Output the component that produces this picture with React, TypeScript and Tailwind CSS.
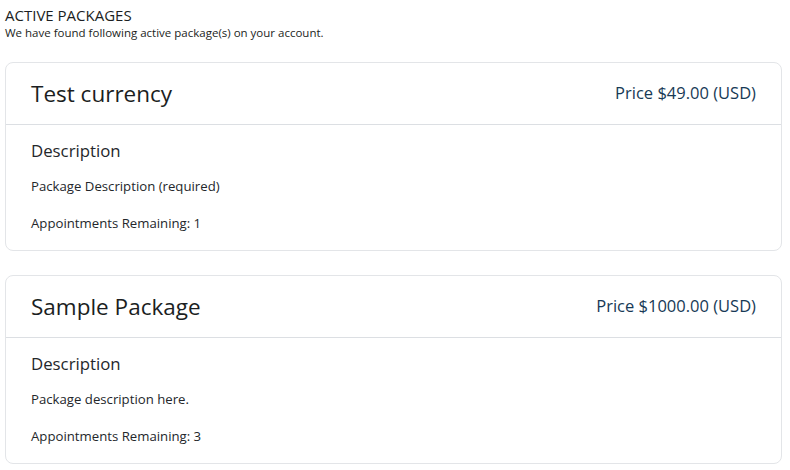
import React from 'react';

type Pkg = {
  name: string;
  price: string;
  description: string;
  remaining: number;
};

const packages: Pkg[] = [
  { name: 'Test currency', price: '$49.00', description: 'Package Description (required)', remaining: 1 },
  { name: 'Sample Package', price: '$1000.00', description: 'Package description here.', remaining: 3 },
];

const PackageCard = ({ pkg }: { pkg: Pkg }) => (
  <div className="rounded-lg border border-[#e3e5e8] bg-white">
    <div className="flex items-center justify-between h-[62px] px-[25px] border-b border-[#dcdfe3]">
      <h3 className="text-[22.5px] text-[#1b1e22] leading-none mt-[2px]">{pkg.name}</h3>
      <span className="text-[16.5px] text-[#173a56]">Price {pkg.price} (USD)</span>
    </div>
    <div className="px-[25px] pt-[14px] pb-[18px] text-[#24272b]">
      <h4 className="text-[16.8px] leading-[24px]">Description</h4>
      <p className="text-[13.2px] mt-[14px] leading-[18px]">{pkg.description}</p>
      <p className="text-[13.2px] mt-[19px] leading-[18px]">Appointments Remaining: {pkg.remaining}</p>
    </div>
  </div>
);

export default function App() {
  return (
    <div className="min-h-screen bg-white pl-[5px] pr-[8px] pt-[5px] font-['Open_Sans',sans-serif] text-[#1b1e22]">
      <h2 className="text-[15px] leading-[20px]">ACTIVE PACKAGES</h2>
      <p className="text-[11.5px] leading-[14px] mt-[1px]">We have found following active package(s) on your account.</p>
      <div className="mt-[22px] flex flex-col gap-[24px]">
        {packages.map((p) => (
          <PackageCard key={p.name} pkg={p} />
        ))}
      </div>
    </div>
  );
}
